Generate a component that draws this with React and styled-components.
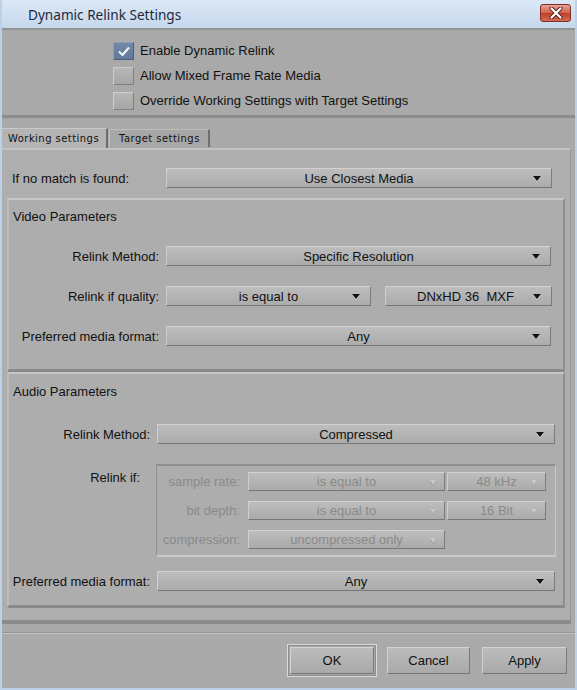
import styled, { createGlobalStyle } from "styled-components"

const Global = createGlobalStyle`
html, body { margin:0; padding:0; background:#b9cde5; }
body { font-family:"Liberation Sans", Arial, sans-serif; }
`

const Window = styled.div`
width:577px;
height:690px;
box-sizing:border-box;
display:flex;
flex-direction:column;
background:#aaaaaa;
border-left:2px solid #bcd0e8;
border-right:2px solid #bcd0e8;
border-bottom:2px solid #bcd0e8;
`

const TitleBar = styled.div`
height:28px;
flex:none;
display:flex;
align-items:center;
justify-content:space-between;
padding:0 4px 0 26px;
background:linear-gradient(#dbe7f5, #c6d8ed);
font-family:"Noto Sans", "Liberation Sans", sans-serif;
font-size:13.6px;
color:#1b2a3e;
`

const CloseBtn = styled.div`
width:31px;
height:18px;
box-sizing:border-box;
border:1px solid #7d3026;
border-radius:3px;
background:linear-gradient(#e7a293, #d0604b 50%, #c0402b 51%, #d46a52);
display:flex;
align-items:center;
justify-content:center;
margin-top:-2px;
`

const TopPanel = styled.div`
height:90px;
flex:none;
box-sizing:border-box;
border-top:2px solid #939393;
border-bottom:3px solid #8d8d8d;
padding:8px 0 0 111px;
background:#a9a9a9;
`

const CheckRow = styled.label`
height:25px;
display:flex;
align-items:center;
gap:6px;
font-size:13px;
color:#111;
`

const Box = styled.span`
width:21px;
height:18px;
box-sizing:border-box;
display:flex;
align-items:center;
justify-content:center;
background:${p => p.$on ? "linear-gradient(#7188a8, #62799a)" : "linear-gradient(#b7b7b7, #a6a6a6)"};
border:1px solid;
border-color:${p => p.$on ? "#8a9dba #4e5e78 #4e5e78 #8a9dba" : "#cdcdcd #7f7f7f #7f7f7f #cdcdcd"};
`

const TabsRow = styled.div`
height:30px;
flex:none;
display:flex;
align-items:flex-end;
background:#a9a9a9;
`

const Tab = styled.div`
height:${p => p.$active ? "20px" : "18px"};
margin-bottom:${p => p.$active ? "0" : "1px"};
box-sizing:border-box;
padding:0 ${p => p.$active ? "7px" : "8px"} 0 ${p => p.$active ? "6px" : "9px"};
display:flex;
align-items:center;
font-family:"DejaVu Sans", Tahoma, sans-serif;
font-size:10px;
letter-spacing:0.45px;
color:#111;
background:${p => p.$active ? "#b4b4b4" : "#a7a7a7"};
border-top:1px solid ${p => p.$active ? "#c9c9c9" : "#bdbdbd"};
border-left:${p => p.$active ? "0" : "1px solid #c4c4c4"};
border-right:2px solid #6f6f6f;
margin-left:${p => p.$active ? "0" : "1px"};
`

const Content = styled.div`
flex:none;
height:476px;
box-sizing:border-box;
margin-right:4px;
padding:18px 5px 0 5px;
background:#aeaeae;
border-top:2px solid #c3c3c3;
border-bottom:4px solid #8b8b8b;
border-right:1px solid #959595;
display:flex;
flex-direction:column;
`

const MatchRow = styled.div`
display:grid;
grid-template-columns:159px 386px;
align-items:center;
height:20px;
margin-bottom:10px;
font-size:13px;
color:#111;
& > span { padding-left:5px; }
`

const Group = styled.div`
box-sizing:border-box;
height:${p => p.$h}px;
border-top:2px solid #c6c6c6;
border-left:2px solid #bdbdbd;
border-right:2px solid #8e8e8e;
border-bottom:3px solid #8a8a8a;
padding:${p => p.$pt}px ${p => p.$pr}px 0 0;
display:flex;
flex-direction:column;
background:#adadad;
`

const GroupTitle = styled.div`
height:16px;
line-height:16px;
padding-left:4px;
font-size:13px;
color:#111;
margin-bottom:${p => p.$mb}px;
`

const Row = styled.div`
display:grid;
grid-template-columns:${p => p.$label}px 1fr;
column-gap:7px;
align-items:${p => p.$top ? "start" : "center"};
margin-bottom:${p => p.$mb || 0}px;
font-size:13px;
color:#111;
& > span { text-align:right; padding-right:${p => p.$pad || 0}px; padding-top:${p => p.$top ? 6 : 0}px; }
`

const Pair = styled.div`
display:flex;
gap:${p => p.$gap}px;
`

const Drop = styled.div`
position:relative;
box-sizing:border-box;
height:${p => p.$h || 20}px;
width:${p => p.$w ? p.$w + "px" : "auto"};
flex:${p => p.$w ? "none" : "1"};
display:flex;
align-items:center;
justify-content:center;
padding-right:${p => p.$shift || 0}px;
font-size:13px;
color:${p => p.$off ? "#8a8a8a" : "#111"};
background:linear-gradient(#bdbdbd, #ababab);
border:1px solid;
border-color:#d2d2d2 #7c7c7c #777 #cecece;
white-space:pre;
&::after {
  content:"";
  position:absolute;
  right:${p => p.$off ? 8 : 10}px;
  top:50%;
  margin-top:-2px;
  border-left:${p => p.$off ? 3 : 4}px solid transparent;
  border-right:${p => p.$off ? 3 : 4}px solid transparent;
  border-top:5px solid ${p => p.$off ? "#c9c9c9" : "#111"};
  filter:drop-shadow(0 1px 0 ${p => p.$off ? "#999" : "#d8d8d8"});
}
`

const Inner = styled.div`
margin-left:-1px;
box-sizing:border-box;
height:93px;
padding:6px 9px 0 0;
border-top:2px solid #8f8f8f;
border-left:1px solid #8f8f8f;
border-right:1px solid #c9c9c9;
border-bottom:2px solid #c9c9c9;
display:flex;
flex-direction:column;
gap:10px;
`

const InnerRow = styled.div`
display:grid;
grid-template-columns:89px 197px 99px;
column-gap:2px;
align-items:center;
font-size:13px;
color:#8a8a8a;
& > span { text-align:right; padding-right:6px; }
`

const Footer = styled.div`
flex:1;
display:flex;
align-items:center;
justify-content:flex-end;
gap:12px;
padding-right:8px;
margin-top:8px;
border-top:1px solid #959595;
box-shadow:inset 0 1px 0 #c2c2c2;
`

const Focus = styled.div`
padding:2px;
border:1px solid #dadada;
outline:1px solid #8d8d8d;
outline-offset:-2px;
margin-right:-2px;
`

const Button = styled.div`
width:${p => p.$w}px;
height:27px;
box-sizing:border-box;
display:flex;
align-items:center;
justify-content:center;
font-size:13px;
color:#111;
background:linear-gradient(#bcbcbc, #a9a9a9);
border:1px solid;
border-color:#d4d4d4 #7a7a7a #747474 #d0d0d0;
`

function Check() {
  return (
    <svg width="14" height="12" viewBox="0 0 14 12">
      <path d="M2 6.5 L5.5 10 L12 2.5" fill="none" stroke="#f4f6fa" strokeWidth="2" />
    </svg>
  )
}

export default function App() {
  return (
    <>
      <Global />
      <Window>
        <TitleBar>
          <span>Dynamic Relink Settings</span>
          <CloseBtn>
            <svg width="14" height="12" viewBox="0 0 14 12">
              <path d="M2.5 1.5 L11.5 10.5 M11.5 1.5 L2.5 10.5" stroke="#5a2018" strokeWidth="4" strokeLinecap="round" />
              <path d="M2.5 1.5 L11.5 10.5 M11.5 1.5 L2.5 10.5" stroke="#fff" strokeWidth="2.2" strokeLinecap="round" />
            </svg>
          </CloseBtn>
        </TitleBar>

        <TopPanel>
          <CheckRow><Box $on><Check /></Box>Enable Dynamic Relink</CheckRow>
          <CheckRow><Box />Allow Mixed Frame Rate Media</CheckRow>
          <CheckRow><Box />Override Working Settings with Target Settings</CheckRow>
        </TopPanel>

        <TabsRow>
          <Tab $active>Working settings</Tab>
          <Tab>Target settings</Tab>
        </TabsRow>

        <Content>
          <MatchRow>
            <span>If no match is found:</span>
            <Drop>Use Closest Media</Drop>
          </MatchRow>

          <Group $h={174} $pt={9} $pr={12}>
            <GroupTitle $mb={21}>Video Parameters</GroupTitle>
            <Row $label={150} $mb={20}>
              <span>Relink Method:</span>
              <Drop>Specific Resolution</Drop>
            </Row>
            <Row $label={150} $mb={20}>
              <span>Relink if quality:</span>
              <Pair $gap={14}>
                <Drop $w={205}>is equal to</Drop>
                <Drop $w={167} $shift={6}>DNxHD 36  MXF</Drop>
              </Pair>
            </Row>
            <Row $label={150}>
              <span>Preferred media format:</span>
              <Drop>Any</Drop>
            </Row>
          </Group>

          <Group $h={236} $pt={10} $pr={8}>
            <GroupTitle $mb={24}>Audio Parameters</GroupTitle>
            <Row $label={141} $mb={20}>
              <span>Relink Method:</span>
              <Drop>Compressed</Drop>
            </Row>
            <Row $label={141} $mb={14} $pad={10} $top>
              <span>Relink if:</span>
              <Inner>
                <InnerRow>
                  <span>sample rate:</span>
                  <Drop $off $h={19}>is equal to</Drop>
                  <Drop $off $h={19}>48 kHz</Drop>
                </InnerRow>
                <InnerRow>
                  <span>bit depth:</span>
                  <Drop $off $h={19}>is equal to</Drop>
                  <Drop $off $h={19}>16 Bit</Drop>
                </InnerRow>
                <InnerRow>
                  <span>compression:</span>
                  <Drop $off $h={19}>uncompressed only</Drop>
                </InnerRow>
              </Inner>
            </Row>
            <Row $label={141}>
              <span>Preferred media format:</span>
              <Drop>Any</Drop>
            </Row>
          </Group>
        </Content>

        <Footer>
          <Focus><Button $w={84}>OK</Button></Focus>
          <Button $w={83}>Cancel</Button>
          <Button $w={85}>Apply</Button>
        </Footer>
      </Window>
    </>
  )
}
